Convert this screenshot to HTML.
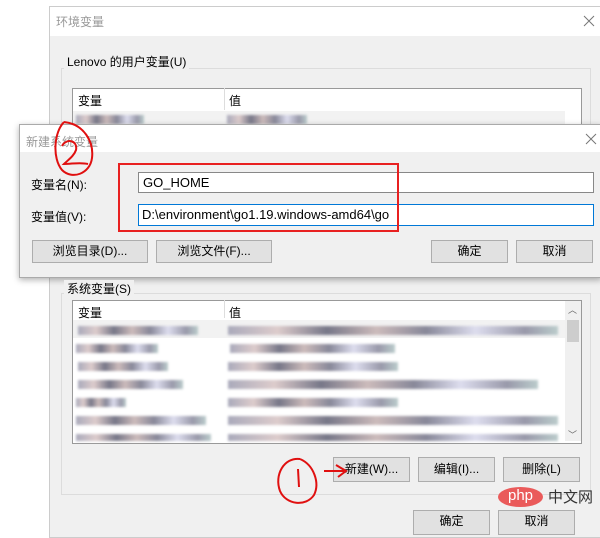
<html><head><style>
body{margin:0;width:600px;height:532px;background:#fff;position:relative;overflow:hidden;font-family:"Liberation Sans","Noto Sans CJK SC",sans-serif;font-size:12px;color:#000}
.a{position:absolute}
.btn{position:absolute;background:#e1e1e1;border:1px solid #adadad;box-sizing:border-box;text-align:center;font-size:12px;line-height:21px}
.blur{position:absolute;height:9px;filter:blur(1.2px);background:linear-gradient(90deg,#aab 0,#dcc 15%,#778 30%,#cbb 45%,#889 60%,#dde 75%,#99a 90%,#bcc 100%)}
</style></head><body>
<div class="a" style="left:49px;top:6px;width:560px;height:530px;background:#f0f0f0;border:1px solid #ccc"></div>
<div class="a" style="left:50px;top:7px;width:550px;height:29px;background:#fff"></div>
<div class="a" style="left:56px;top:13px;color:#999;font-size:12px">环境变量</div>
<svg class="a" style="left:583px;top:15px" width="12" height="12"><path d="M1 1L11 11M11 1L1 11" stroke="#777" stroke-width="1"/></svg>
<div class="a" style="left:61px;top:68px;width:528px;height:80px;border:1px solid #dcdcdc"></div>
<div class="a" style="left:64px;top:53px;background:#f0f0f0;padding:0 3px">Lenovo 的用户变量(U)</div>
<div class="a" style="left:72px;top:88px;width:508px;height:60px;background:#fff;border:1px solid #999"></div>
<div class="a" style="left:78px;top:92px">变量</div><div class="a" style="left:224px;top:88px;width:1px;height:22px;background:#ddd"></div>
<div class="a" style="left:229px;top:92px">值</div>
<div class="a" style="left:73px;top:111px;width:492px;height:18px;background:#f2f2f2"></div>
<div class="blur" style="left:76px;top:115px;width:68px"></div><div class="blur" style="left:227px;top:115px;width:80px"></div>

<div class="a" style="left:19px;top:124px;width:581px;height:152px;background:#f0f0f0;border:1px solid #aaa;box-shadow:0 2px 6px rgba(0,0,0,.3)"></div>
<div class="a" style="left:20px;top:125px;width:580px;height:27px;background:#fff"></div>
<div class="a" style="left:26px;top:133px;color:#999">新建系统变量</div>
<svg class="a" style="left:585px;top:133px" width="12" height="12"><path d="M1 1L11 11M11 1L1 11" stroke="#777" stroke-width="1"/></svg>
<div class="a" style="left:31px;top:176px">变量名(N):</div>
<div class="a" style="left:31px;top:208px">变量值(V):</div>
<div class="a" style="left:138px;top:172px;width:456px;height:21px;background:#fff;border:1px solid #888;box-sizing:border-box;padding:2px 4px;font-size:13px">GO_HOME</div>
<div class="a" style="left:138px;top:204px;width:456px;height:22px;background:#fff;border:1px solid #0078d7;box-sizing:border-box;padding:2px 3px;font-size:13px">D:\environment\go1.19.windows-amd64\go</div>
<div class="a" style="left:118px;top:163px;width:281px;height:69px;border:2px solid #e82020;box-sizing:border-box"></div>
<div class="btn" style="left:32px;top:240px;width:116px;height:23px">浏览目录(D)...</div>
<div class="btn" style="left:156px;top:240px;width:116px;height:23px">浏览文件(F)...</div>
<div class="btn" style="left:431px;top:240px;width:77px;height:23px">确定</div>
<div class="btn" style="left:516px;top:240px;width:77px;height:23px">取消</div>
<svg class="a" style="left:50px;top:118px" width="48" height="62"><path d="M14 4 C4 14 2 40 12 52 C22 62 40 56 42 40 C44 24 34 6 14 4 M12 28 C16 20 28 22 26 32 C24 38 18 42 14 46 C22 46 30 44 38 46" fill="none" stroke="#e01010" stroke-width="2"/></svg>

<div class="a" style="left:61px;top:293px;width:528px;height:200px;border:1px solid #dcdcdc"></div>
<div class="a" style="left:64px;top:280px;background:#f0f0f0;padding:0 3px">系统变量(S)</div>
<div class="a" style="left:72px;top:300px;width:508px;height:142px;background:#fff;border:1px solid #999;overflow:hidden"></div>
<div class="a" style="left:78px;top:304px">变量</div><div class="a" style="left:224px;top:300px;width:1px;height:18px;background:#ddd"></div>
<div class="a" style="left:229px;top:304px">值</div>
<div class="a" style="left:73px;top:320px;width:492px;height:18px;background:#f2f2f2"></div>
<div class="a" style="left:565px;top:301px;width:16px;height:140px;background:#f0f0f0"></div>
<div class="a" style="left:567px;top:320px;width:12px;height:22px;background:#cdcdcd"></div>
<div class="a" style="left:568px;top:303px;font-size:9px;color:#666">︿</div>
<div class="a" style="left:568px;top:428px;font-size:9px;color:#666">﹀</div>
<div class="blur" style="left:78px;top:326px;width:120px"></div><div class="blur" style="left:228px;top:326px;width:330px"></div>
<div class="blur" style="left:76px;top:344px;width:82px"></div><div class="blur" style="left:230px;top:344px;width:165px"></div>
<div class="blur" style="left:78px;top:362px;width:90px"></div><div class="blur" style="left:228px;top:362px;width:170px"></div>
<div class="blur" style="left:78px;top:380px;width:105px"></div><div class="blur" style="left:228px;top:380px;width:310px"></div>
<div class="blur" style="left:76px;top:398px;width:50px"></div><div class="blur" style="left:228px;top:398px;width:170px"></div>
<div class="blur" style="left:76px;top:416px;width:130px"></div><div class="blur" style="left:228px;top:416px;width:330px"></div>
<div class="blur" style="left:76px;top:434px;width:135px;height:7px"></div><div class="blur" style="left:228px;top:434px;width:330px;height:7px"></div>
<div class="btn" style="left:333px;top:457px;width:77px;height:25px;line-height:23px">新建(W)...</div>
<div class="btn" style="left:418px;top:457px;width:77px;height:25px;line-height:23px">编辑(I)...</div>
<div class="btn" style="left:503px;top:457px;width:77px;height:25px;line-height:23px">删除(L)</div>
<svg class="a" style="left:270px;top:455px" width="85" height="55"><path d="M30 4 C14 2 4 20 10 36 C16 50 36 52 44 40 C50 28 44 10 30 4 M28 14 L29 32 M54 16 L74 16 M66 10 L76 16 L68 22" fill="none" stroke="#e01010" stroke-width="2"/></svg>
<div class="btn" style="left:413px;top:510px;width:77px;height:25px">确定</div>
<div class="btn" style="left:498px;top:510px;width:77px;height:25px">取消</div>
<div class="a" style="left:498px;top:487px;width:45px;height:20px;border-radius:50%;background:#ea5a5a;color:#fff;font-size:15px;text-align:center;line-height:18px">php</div>
<div class="a" style="left:548px;top:486px;color:#333;font-size:15px">中文网</div>
</body></html>
